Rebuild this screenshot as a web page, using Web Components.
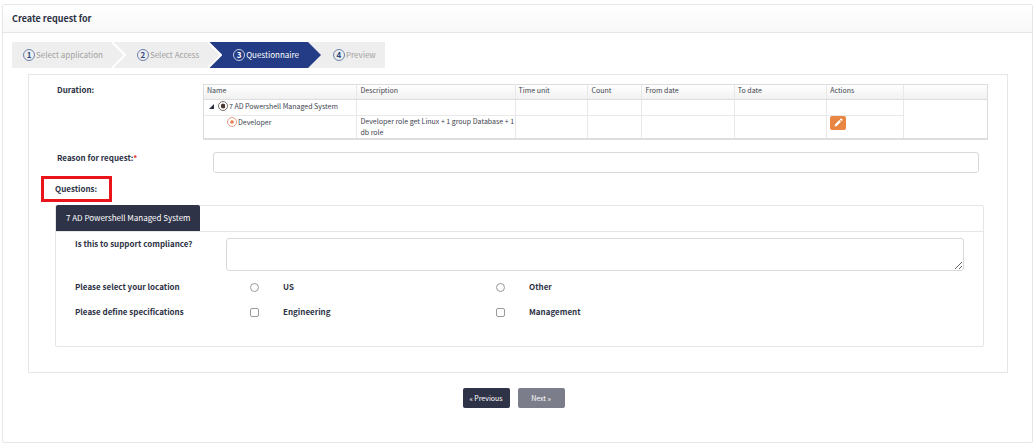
<!DOCTYPE html>
<html lang="en">
<head>
<meta charset="utf-8">
<title>Create request for</title>
<style>
  body {
    margin: 4px 2px 0;
    background: #fff;
    color: #2d3246;
    font: 8px/12px "Noto Sans CJK SC", "Noto Sans", sans-serif;
    --line: #e6e6e6;
    --navy: #2e3347;
    --bold: 700 8px/12px "Noto Sans CJK SC", "Noto Sans", sans-serif;
  }
</style>
</head>
<body>
<request-panel>
  <span slot="title">Create request for</span>
  <wizard-steps></wizard-steps>
  <form-card>
    <duration-field></duration-field>
    <reason-field></reason-field>
    <section-heading>Questions:</section-heading>
    <question-tabs tab="7 AD Powershell Managed System">
      <question-text>Is this to support compliance?</question-text>
      <question-choice type="radio" name="location" options="US|Other">Please select your location</question-choice>
      <question-choice type="checkbox" name="specifications" options="Engineering|Management">Please define specifications</question-choice>
    </question-tabs>
  </form-card>
  <wizard-button slot="actions">« Previous</wizard-button>
  <wizard-button slot="actions" muted>Next »</wizard-button>
</request-panel>

<script>
const define = (name, render) => customElements.define(name, class extends HTMLElement {
  connectedCallback() {
    if (this.shadowRoot) return;
    this.attachShadow({ mode: "open" }).innerHTML =
      `<style>*{box-sizing:border-box}:host{display:block}</style>` + render(this);
  }
});

define("request-panel", () => `
  <style>
    :host { border: 1px solid var(--line); border-radius: 2px; }
    header { padding: 6px 9px 5px; border-bottom: 1px solid var(--line);
      background: linear-gradient(#fff, #f8f8f8); }
    h1 { margin: 0; font-size: 9px; line-height: 16px; font-weight: 700; }
    main { padding: 9px 9px 34px; }
    footer { display: flex; justify-content: center; gap: 8px; margin-top: 15px; padding-right: 8px; }
  </style>
  <header><h1><slot name="title"></slot></h1></header>
  <main><slot></slot><footer><slot name="actions"></slot></footer></main>`);

define("wizard-steps", () => {
  const steps = ["Select application", "Select Access", "Questionnaire", "Preview"];
  const active = 2;
  const fill = i => i === active ? "#233c85" : "#eeeeee";
  const arrow = i => `<svg viewBox="0 0 14 26" aria-hidden="true">
      <rect width="14" height="26" fill="${fill(i + 1)}"/>
      <path d="M0 0L13 13L0 26Z" fill="${fill(i)}"/>
      <path d="M0 0L13 13L0 26" fill="none" stroke="#fff" stroke-width="${i === active ? 0 : 2}"/></svg>`;
  return `
  <style>
    ol { display: flex; margin: 0; padding: 0; list-style: none; }
    li { display: flex; }
    .step { display: flex; align-items: center; gap: 1px; height: 26px; padding: 0 9px 0 11px;
      background: #eee; color: #a0a0a0; white-space: nowrap; }
    .step.on { background: #233c85; color: #fff; }
    b { width: 12px; height: 12px; border: 1px solid #6b82ae; border-radius: 50%;
      color: #2b477e; line-height: 10px; text-align: center; }
    .on b { color: #fff; border-color: #c5cde0; }
    svg { width: 14px; height: 26px; }
  </style>
  <ol>${steps.map((s, i) => `<li${i === active ? ' aria-current="step"' : ""}><span class="step${i === active ? " on" : ""}"><b>${i + 1}</b><span>${s}</span></span>${i < 3 ? arrow(i) : ""}</li>`).join("")}</ol>`;
});

define("form-card", () => `
  <style>
    :host { margin: 6px 15px 0 16px; padding: 9px 19px 25px 26px; border: 1px solid var(--line); }
  </style><slot></slot>`);

define("duration-field", () => `
  <style>
    :host { display: grid; grid-template-columns: 148px 1fr; font-size: 7px; line-height: 11px; }
    h2 { margin: 0; padding-left: 2px; font: var(--bold); }
    table { width: 100%; border-collapse: separate; border-spacing: 0; table-layout: fixed; border: 1px solid #ddd;
      border-bottom: 2px solid #ddd; color: #40444f; }
    th, td { padding: 0 0 0 3px; text-align: left; vertical-align: top; font-weight: 400;
      white-space: nowrap; border-right: 1px solid #e8e8e8; }
    th { padding-bottom: 3px; border-bottom: 1px solid #ddd; background: linear-gradient(#fff, #f1f1f1); }
    th:last-child, td:last-child { border-right: 0; }
    tbody tr:first-child td { height: 16px; }
    tbody tr:first-child td:not(:last-child) { border-bottom: 1px solid #e8e8e8; }
    .item { display: flex; align-items: center; height: 12px; gap: 1px; }
    .item.child { padding-left: 20px; }
    svg { display: block; flex: none; }
    .twist { margin: 0 3px 0 2px; }
    button { display: grid; place-items: center; width: 16px; height: 14px; padding: 0 0 2px; border: 0;
      border-radius: 2px; background: #e98644; }
  </style>
  <h2 id="d">Duration:</h2>
  <table aria-labelledby="d">
    <colgroup><col style="width:19.6%"><col style="width:20.2%"><col style="width:9.3%"><col style="width:6.9%"><col style="width:11.8%"><col style="width:11.8%"><col style="width:9.8%"><col></colgroup>
    <thead><tr><th>Name</th><th>Description</th><th>Time unit</th><th>Count</th><th>From date</th><th>To date</th><th>Actions</th><th></th></tr></thead>
    <tbody>
      <tr>
        <td><div class="item"><svg class="twist" width="5" height="5" viewBox="0 0 5 5"><path d="M5 0V5H0Z" fill="#2d3246"/></svg><svg width="10" height="10" viewBox="0 0 10 10"><circle cx="5" cy="5" r="4.5" fill="#fff" stroke="#7a6f68"/><path d="M3 3.4L5 2.6L7 3.2V7L5 7.6L3 6.6Z" fill="#493b33"/></svg><span>7 AD Powershell Managed System</span></div></td>
        <td></td><td></td><td></td><td></td><td></td><td></td><td></td>
      </tr>
      <tr>
        <td><div class="item child"><svg width="10" height="10" viewBox="0 0 10 10"><circle cx="5" cy="5" r="4.5" fill="#fff" stroke="#e99a85"/><circle cx="5" cy="5" r="1.8" fill="#e97a4c"/></svg><span>Developer</span></div></td>
        <td>Developer role get Linux + 1 group Database + 1<br>db role</td><td></td><td></td><td></td><td></td>
        <td><button type="button" aria-label="Edit"><svg width="9" height="9" viewBox="0 0 8 8"><path d="M.5 7.5L1 5.5L4.7 1.8L6.2 3.3L2.5 7ZM5.2 1.3L6 .5Q6.4 .2 6.8.6L7.4 1.2Q7.8 1.6 7.4 2L6.7 2.8Z" fill="#fff"/></svg></button></td><td></td>
      </tr>
    </tbody>
  </table>`);

define("reason-field", () => `
  <style>
    :host { display: grid; grid-template-columns: 149px 1fr; margin-top: 12px; }
    label { padding-left: 2px; font: var(--bold); }
    i { color: #e0302a; font-style: normal; }
    input { height: 21px; margin: 0 9px; padding: 0 4px; border: 1px solid #d9d9d9; border-radius: 3px;
      font: inherit; color: inherit; min-width: 0; }
  </style>
  <label for="r">Reason for request:<i>*</i></label><input id="r" type="text" required>`);

define("section-heading", () => `
  <style>
    :host { width: fit-content; margin: 3px 0 3px -14px; border: 3px solid #ea151b; }
    h2 { margin: 0; padding: 4px 12px 4px 11px; font: var(--bold); }
  </style><h2><slot></slot></h2>`);

define("question-tabs", el => `
  <style>
    :host { margin-right: 4px; border: 1px solid var(--line); border-radius: 2px; }
    nav { display: flex; border-bottom: 1px solid var(--line); }
    button { height: 26px; margin: -1px 0 0; padding: 0 9px 0 10px; border: 0; border-radius: 2px 2px 0 0;
      background: var(--navy); color: #fff; font: inherit; }
    section { display: grid; gap: 13px; padding: 6px 19px 28px; }
  </style>
  <nav role="tablist"><button type="button" role="tab" aria-selected="true">${el.getAttribute("tab")}</button></nav>
  <section role="tabpanel"><slot></slot></section>`);

define("question-text", () => `
  <style>
    :host { display: grid; grid-template-columns: 151px 1fr; margin-bottom: -3px; }
    label { font: var(--bold); }
    textarea { height: 33px; margin: 0; border: 1px solid #d9d9d9; border-radius: 3px; font: inherit;
      resize: vertical; min-width: 0; }
  </style>
  <label for="t"><slot></slot></label><textarea id="t"></textarea>`);

define("question-choice", el => {
  const type = el.getAttribute("type"), name = el.getAttribute("name");
  return `
  <style>
    :host { display: grid; grid-template-columns: 151px repeat(3, 1fr); font: var(--bold); }
    div { display: contents; }
    label { display: grid; grid-template-columns: 57px 1fr; align-items: center; }
    input { appearance: none; width: 9px; height: 9px; margin: 0; justify-self: center;
      border: 1px solid #999; background: #fff; border-radius: 2px; }
    input[type=radio] { border-radius: 50%; }
    input:checked { background: var(--navy); }
  </style>
  <div role="group" aria-labelledby="q"><span id="q"><slot></slot></span>
  ${el.getAttribute("options").split("|").map(o => `<label><input type="${type}" name="${name}"><span>${o}</span></label>`).join("")}</div>`;
});

define("wizard-button", el => `
  <style>
    button { min-width: 47px; height: 20px; padding: 0 4px; border: 0; border-radius: 2px;
      background: ${el.hasAttribute("muted") ? "#7b7e8a" : "var(--navy)"}; color: #fff;
      font: inherit; font-size: 7px; display: block; }
  </style><button type="button"><slot></slot></button>`);
</script>
</body>
</html>
